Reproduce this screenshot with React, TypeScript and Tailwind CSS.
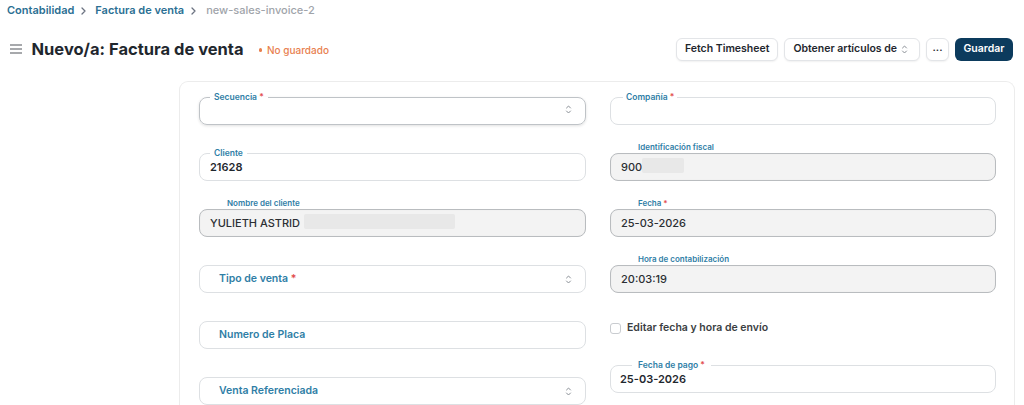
import React from "react";

const Caret = () => (
  <svg width="5" height="8" viewBox="0 0 5 8" fill="none" stroke="#6b7280" strokeWidth="1.3" strokeLinecap="round" strokeLinejoin="round">
    <path d="M1 1 L4 4 L1 7" />
  </svg>
);

const UpDown = ({ className = "" }: { className?: string }) => (
  <svg className={className} width="7" height="11" viewBox="0 0 7 11" fill="none" stroke="#8a8f96" strokeWidth="1" strokeLinecap="round" strokeLinejoin="round">
    <path d="M1.5 4 L3.5 2 L5.5 4" />
    <path d="M1.5 7 L3.5 9 L5.5 7" />
  </svg>
);

const Req = () => <span className="text-[#e24c4c]"> *</span>;

// Outlined field whose label sits in the top border
function LegendField({
  label,
  required,
  value,
  select,
  strong,
  legendClass = "ml-[0px] px-[4px]",
  padClass = "pl-[10px]",
}: {
  label: string;
  required?: boolean;
  value?: string;
  select?: boolean;
  strong?: boolean;
  legendClass?: string;
  padClass?: string;
}) {
  return (
    <div className="h-[56px] pt-[10px]">
      <fieldset
        className={`rounded-[8px] border ${padClass} pr-[12px] ${
          strong
            ? "border-[#bfc3c7] shadow-[0_1px_3px_rgba(0,0,0,0.12)]"
            : "border-[#dde0e3]"
        }`}
      >
        <legend className={`${legendClass} text-[8.5px] leading-[10px] font-semibold text-[#2f7ea6]`}>
          {label}
          {required && <Req />}
        </legend>
        <div className="h-[22px] pb-[4px] flex items-center">
          {value && <span className="text-[11px] font-semibold text-[#1f272e]">{value}</span>}
          {select && <UpDown className="ml-auto mt-[-4px] mr-[1px]" />}
        </div>
      </fieldset>
    </div>
  );
}

// Read-only grey field with its label above the box
function GreyField({
  label,
  required,
  value,
  hidden,
}: {
  label: string;
  required?: boolean;
  value: string;
  hidden?: string;
}) {
  return (
    <div className="h-[56px] pt-[4px]">
      <div className="h-[11px] leading-[11px] pl-[28px] text-[8px] font-semibold text-[#2f7ea6]">
        {label}
        {required && <Req />}
      </div>
      <div className="h-[28px] rounded-[8px] border border-[#b9bcbf] bg-[#f3f3f3] shadow-[inset_0_0_1px_rgba(0,0,0,0.08)] flex items-center pl-[10px]">
        <span className="text-[11px] font-medium text-[#2b2f33]">{value}</span>
        {hidden && <span className={`${hidden} h-[15px] rounded-[2px] bg-[#e8e8e8] mt-[-3px]`} />}
      </div>
    </div>
  );
}

// Empty input/select showing its label as placeholder
function PlainField({ label, required, select }: { label: string; required?: boolean; select?: boolean }) {
  return (
    <div className="h-[56px] pt-[15px]">
      <div className="h-[28px] rounded-[8px] border border-[#dde0e3] flex items-center pl-[19px] pr-[13px]">
        <span className="text-[10.5px] font-semibold text-[#2f7ea6]">
          {label}
          {required && <Req />}
        </span>
        {select && <UpDown className="ml-auto" />}
      </div>
    </div>
  );
}

const Btn = ({ children, className = "" }: { children: React.ReactNode; className?: string }) => (
  <button
    className={`h-[23px] rounded-[6px] border border-[#e3e5e8] bg-white shadow-[0_1px_2px_rgba(0,0,0,0.06)] text-[10.5px] font-semibold text-[#1f272e] flex items-center ${className}`}
  >
    {children}
  </button>
);

export default function App() {
  return (
    <div className="w-[1024px] h-[405px] overflow-hidden bg-white font-['Inter',sans-serif] text-[#1f272e]">
      {/* breadcrumb */}
      <nav className="h-[21px] flex items-center pl-[7px] text-[11px] font-semibold">
        <span className="text-[#2b6f93]">Contabilidad</span>
        <span className="ml-[7px] mr-[9px] flex">
          <Caret />
        </span>
        <span className="text-[#2b6f93]">Factura de venta</span>
        <span className="ml-[7px] mr-[10px] flex">
          <Caret />
        </span>
        <span className="text-[#a0a4aa] font-medium">new-sales-invoice-2</span>
      </nav>

      {/* page head */}
      <header className="mt-[16px] h-[24px] flex items-center pl-[10px] pr-[11px]">
        <svg width="12" height="10" viewBox="0 0 12 10" stroke="#8a8d91" strokeWidth="1.4">
          <path d="M0 1 H12 M0 5 H12 M0 9 H12" />
        </svg>
        <h1 className="ml-[9.5px] text-[16.5px] leading-none font-bold text-[#1f272e]">Nuevo/a: Factura de venta</h1>
        <span className="ml-[15px] mt-[2px] flex items-center text-[10px] font-medium text-[#e8804f]">
          <span className="w-[3.5px] h-[3.5px] rounded-full bg-[#e8804f] mr-[5px]" />
          No guardado
        </span>
        <div className="ml-auto flex items-center gap-[6px]">
          <Btn className="px-[8px]">Fetch Timesheet</Btn>
          <Btn className="pl-[8px] pr-[11px]">
            Obtener artículos de
            <UpDown className="ml-[4px] mt-[1px]" />
          </Btn>
          <Btn className="w-[23px] justify-center pb-[3px]">...</Btn>
          <button className="h-[23px] px-[8.5px] rounded-[6px] bg-[#0c3b5d] text-white text-[10.5px] font-semibold">
            Guardar
          </button>
        </div>
      </header>

      {/* form card */}
      <div className="mt-[20px] ml-[179px] w-[836px] h-[330px] rounded-t-[9px] border border-b-0 border-[#ececec] grid grid-cols-[387px_386px] gap-x-[24px] pl-[19px] content-start">
        <div className="flex flex-col">
          <LegendField label="Secuencia" required select strong />
          <LegendField label="Cliente" value="21628" />
          <GreyField label="Nombre del cliente" value="YULIETH ASTRID" hidden="ml-[4px] w-[151px]" />
          <PlainField label="Tipo de venta" required select />
          <PlainField label="Numero de Placa" />
          <PlainField label="Venta Referenciada" select />
        </div>
        <div className="flex flex-col">
          <LegendField label="Compañía" required padClass="pl-[12px]" legendClass="px-[3px]" />
          <GreyField label="Identificación fiscal" value="900" hidden="ml-[0px] w-[42px]" />
          <GreyField label="Fecha" required value="25-03-2026" />
          <GreyField label="Hora de contabilización" value="20:03:19" />
          <div className="h-[44px] pt-[16px]">
            <label className="flex items-center h-[12px]">
              <span className="w-[11px] h-[11px] rounded-[3px] border border-[#c9ccd0] bg-white" />
              <span className="ml-[6px] text-[10.5px] font-semibold text-[#3a3e42]">Editar fecha y hora de envío</span>
            </label>
          </div>
          <LegendField label="Fecha de pago" required value="25-03-2026" padClass="pl-[9px]" legendClass="ml-[12px] px-[6px]" />
        </div>
      </div>
    </div>
  );
}
